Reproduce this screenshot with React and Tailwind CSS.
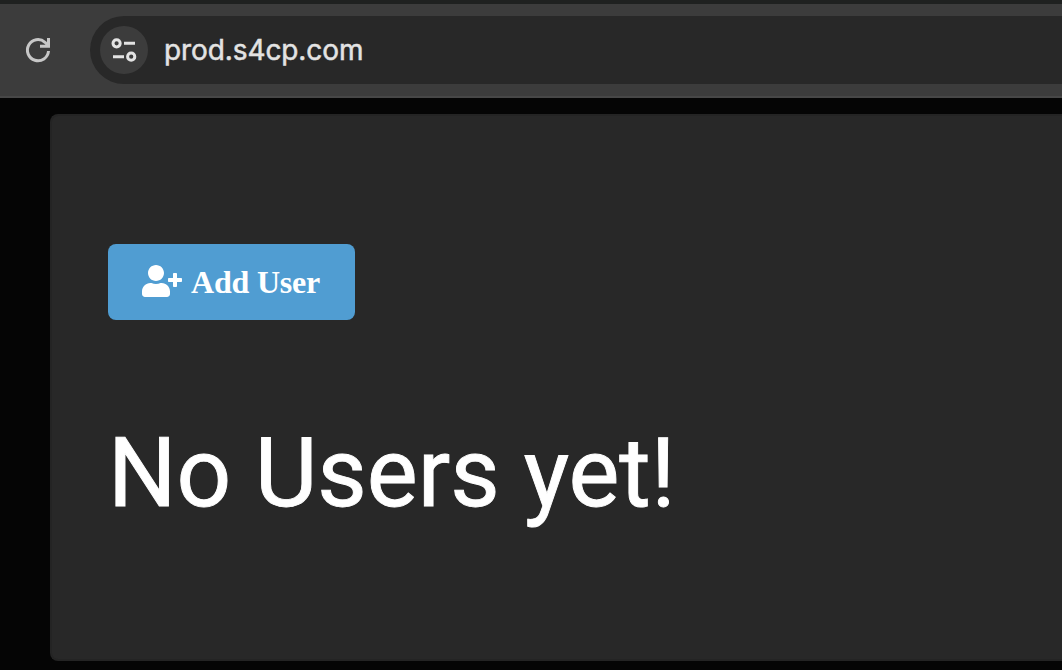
import { FaUserPlus } from "react-icons/fa";

function ReloadIcon() {
  return (
    <svg className="h-6 w-6 overflow-visible" viewBox="0 0 24 24" fill="none" stroke="#c7c7c7" strokeWidth="3">
      <path d="M22.5 13A10.55 10.55 0 1 1 19 4.3L22 7.4" />
      <path d="M22.5 0V8.3H14" />
    </svg>
  );
}

function SiteSettingsIcon() {
  return (
    <svg className="h-12 w-12" viewBox="0 0 48 48" fill="none" stroke="#e3e3e3" strokeWidth="3">
      <circle cx="16.6" cy="17.3" r="3.6" />
      <path d="M24 17.2H35M13 30.7H24" />
      <circle cx="31.2" cy="30.7" r="3.6" />
    </svg>
  );
}

function BrowserBar() {
  return (
    <header className="flex h-[98px] shrink-0 items-center border-t-4 border-b-2 border-t-[#1f2120] border-b-[#474747] bg-[#3c3c3c] pl-[26px]">
      <button className="mr-10 flex shrink-0" aria-label="Reload">
        <ReloadIcon />
      </button>
      <div className="flex h-[68px] flex-1 items-center rounded-l-full bg-[#282828] pl-2.5">
        <div className="h-12 w-12 rounded-full bg-[#3c3c3c]">
          <SiteSettingsIcon />
        </div>
        <span className="ml-4 font-['Inter',sans-serif] text-[28px] leading-8 tracking-[-0.1px] text-[#e3e3e3] [-webkit-text-stroke:0.5px_#e3e3e3]">
          prod.s4cp.com
        </span>
      </div>
    </header>
  );
}

export default function App() {
  return (
    <div className="flex h-[670px] w-full flex-col overflow-hidden bg-[#050505]">
      <BrowserBar />
      <main className="flex-1 pt-4 pl-[50px]">
        <section className="h-[547px] rounded-l-lg border-2 border-r-0 border-[#242424] bg-[#282828] pt-32 pl-14">
          <button className="flex h-[76px] w-[247px] items-center rounded-lg bg-[#509dd2] pl-[34px] text-white">
            <FaUserPlus className="mb-0.5 h-8 w-10" />
            <span className="ml-[9px] font-['Liberation_Serif',serif] text-[32px] leading-9 font-bold tracking-[-0.2px] whitespace-nowrap">
              Add User
            </span>
          </button>
          <h1 className="mt-[97px] font-['Roboto',sans-serif] text-[96px] leading-[112px] font-normal whitespace-nowrap text-white [-webkit-text-stroke:0.9px_white]">
            No Users yet!
          </h1>
        </section>
      </main>
    </div>
  );
}
